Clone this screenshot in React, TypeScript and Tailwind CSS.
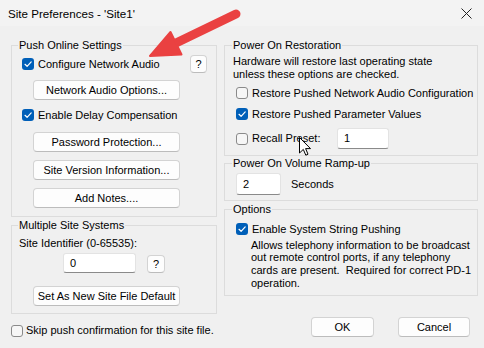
import type { ReactNode } from "react";

function Check({ checked }: { checked?: boolean }) {
  if (checked) {
    return (
      <span className="flex h-[12px] w-[12px] shrink-0 items-center justify-center rounded-[3px] bg-[#005fb8]">
        <svg width="12" height="12" viewBox="0 0 12 12">
          <polyline points="3,6.3 5.1,8.3 9.2,3.9" fill="none" stroke="#fff" strokeWidth="1.2" strokeLinecap="round" strokeLinejoin="round" />
        </svg>
      </span>
    );
  }
  return <span className="h-[12px] w-[12px] shrink-0 rounded-[3px] border border-[#8a8a8a] bg-[#f6f6f6]" />;
}

function Btn({ children, className = "" }: { children: ReactNode; className?: string }) {
  return (
    <div
      className={`flex items-center justify-center rounded-[4px] border border-[#d3d3d3] border-b-[#bcbcbc] bg-[#fdfdfd] text-black ${className}`}
    >
      {children}
    </div>
  );
}

function Field({ value, className = "" }: { value: string; className?: string }) {
  return (
    <div className={`flex items-center rounded-[3px] border border-[#e3e3e3] border-b-[#8a8a8a] bg-white pl-[6px] ${className}`}>
      {value}
    </div>
  );
}

function Group({ title, children, className = "" }: { title: string; children: ReactNode; className?: string }) {
  return (
    <fieldset className={`min-w-0 border border-[#dcdcdc] ${className}`}>
      <legend className="ml-[6px] px-[1px] leading-[13px]">{title}</legend>
      {children}
    </fieldset>
  );
}

function CheckRow({ checked, label, className = "" }: { checked?: boolean; label: string; className?: string }) {
  return (
    <div className={`flex items-center gap-[4px] ${className}`}>
      <Check checked={checked} />
      <span>{label}</span>
    </div>
  );
}

export default function App() {
  return (
    <div className="relative h-[348px] w-[484px] overflow-hidden bg-[#f0f0f0] font-['Liberation_Sans',Arial,sans-serif] text-[11px] leading-[13px] text-black">
      {/* title bar */}
      <div className="flex h-[26px] items-center justify-between bg-[#f3f3f3] pl-[8px] pr-[12px]">
        <span className="text-[11.6px]">Site Preferences - 'Site1'</span>
        <svg width="11" height="11" viewBox="0 0 11 11">
          <path d="M0.5 0.5 L10.5 10.5 M10.5 0.5 L0.5 10.5" stroke="#222" strokeWidth="1" />
        </svg>
      </div>

      <div className="pl-[11px] pt-[13px]">
        <div className="flex items-start gap-[7px]">
          {/* left column */}
          <div className="flex w-[206px] flex-col">
            <Group title="Push Online Settings">
              <div className="flex flex-col pb-[8px] pl-[10px] pr-[9px]">
                <div className="mt-[3px] flex h-[18px] items-center">
                  <CheckRow checked label="Configure Network Audio" />
                  <Btn className="ml-auto h-[18px] w-[17px]">?</Btn>
                </div>
                <Btn className="ml-[11px] mt-[7px] h-[20px] w-[147px]">Network Audio Options...</Btn>
                <CheckRow checked label="Enable Delay Compensation" className="mt-[6px] h-[18px]" />
                <Btn className="ml-[11px] mt-[8px] h-[20px] w-[147px]">Password Protection...</Btn>
                <Btn className="ml-[11px] mt-[8px] h-[20px] w-[147px]">Site Version Information...</Btn>
                <Btn className="ml-[11px] mt-[8px] h-[20px] w-[147px]">Add Notes....</Btn>
              </div>
            </Group>

            <Group title="Multiple Site Systems" className="mt-[2px]">
              <div className="flex flex-col pb-[7px] pl-[7px]">
                <div className="mt-[5px]">Site Identifier (0-65535):</div>
                <div className="ml-[44px] mt-[3px] flex items-end gap-[11px]">
                  <Field value="0" className="h-[20px] w-[73px]" />
                  <Btn className="h-[18px] w-[18px]">?</Btn>
                </div>
                <Btn className="ml-[14px] mt-[13px] h-[20px] w-[147px]">Set As New Site File Default</Btn>
              </div>
            </Group>
          </div>

          {/* right column */}
          <div className="flex w-[254px] flex-col">
            <Group title="Power On Restoration" className="[&>legend]:ml-[7px]">
              <div className="flex flex-col pb-[6px] pl-[8px]">
                <div className="mt-[3px]">
                  Hardware will restore last operating state
                  <br />
                  unless these options are checked.
                </div>
                <CheckRow label="Restore Pushed Network Audio Configuration" className="ml-[3px] mt-[4px] h-[16px]" />
                <CheckRow checked label="Restore Pushed Parameter Values" className="ml-[3px] mt-[5px] h-[16px]" />
                <div className="ml-[3px] mt-[6px] flex h-[21px] items-center gap-[4px]">
                  <Check />
                  <span className="w-[81px]">Recall Preset:</span>
                  <Field value="1" className="h-[21px] w-[52px]" />
                </div>
              </div>
            </Group>

            <Group title="Power On Volume Ramp-up" className="mt-[1px] [&>legend]:ml-[7px]">
              <div className="flex items-center gap-[10px] pb-[5px] pl-[11px] pt-[3px]">
                <Field value="2" className="h-[22px] w-[45px]" />
                <span>Seconds</span>
              </div>
            </Group>

            <Group title="Options" className="mt-[2px] [&>legend]:ml-[7px]">
              <div className="flex flex-col pb-[6px] pl-[11px]">
                <CheckRow checked label="Enable System String Pushing" className="mt-[6px] h-[14px]" />
                <p className="ml-[15px] mt-[2.5px] leading-[12.7px]">
                  Allows telephony information to be broadcast
                  <br />
                  out remote control ports, if any telephony
                  <br />
                  cards are present.&nbsp; Required for correct PD-1
                  <br />
                  operation.
                </p>
              </div>
            </Group>
          </div>
        </div>

        {/* bottom row */}
        <div className="mt-[3px] flex items-start pr-[14px]">
          <div className="mt-[7px] flex items-center gap-[3px]">
            <Check />
            <span>Skip push confirmation for this site file.</span>
          </div>
          <Btn className="ml-auto h-[20px] w-[63px]">OK</Btn>
          <Btn className="ml-[24px] h-[20px] w-[72px]">Cancel</Btn>
        </div>
      </div>

      {/* annotation arrow */}
      <svg className="pointer-events-none absolute left-0 top-0" width="484" height="348" viewBox="0 0 484 348">
        <line x1="176" y1="43" x2="236" y2="14" stroke="#ea4141" strokeWidth="9" strokeLinecap="round" />
        <path d="M150 56 L170.5 32 L181.5 54.5 Z" fill="#ea4141" stroke="#ea4141" strokeWidth="2" strokeLinejoin="round" />
      </svg>

      {/* mouse cursor */}
      <svg className="pointer-events-none absolute left-[299px] top-[137px]" width="13" height="20" viewBox="0 0 13 20">
        <path d="M0.5 0.5 L0.5 16 L4.3 12.4 L6.8 18.2 L9 17.2 L6.6 11.6 L11.5 11.6 Z" fill="#fff" stroke="#000" strokeWidth="1" strokeLinejoin="round" />
      </svg>
    </div>
  );
}
